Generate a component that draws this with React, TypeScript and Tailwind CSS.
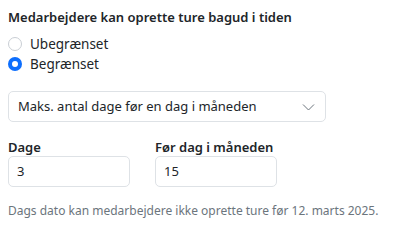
import React from "react";

export default function App() {
  return (
    <div
      className="bg-white w-[412px] h-[246px] pl-2 pt-[8px] text-[#212529]"
      style={{ fontFamily: '"Noto Sans", "Liberation Sans", sans-serif' }}
    >
      <div className="text-[13px] font-semibold leading-[18px]">
        Medarbejdere kan oprette ture bagud i tiden
      </div>
      <div className="mt-[9px] flex flex-col gap-[2px]">
        <label className="flex items-center gap-[8px] h-[18px] text-[13.5px]">
          <span className="w-[14px] h-[14px] rounded-full border border-[#c9ced4] bg-white" />
          <span>Ubegrænset</span>
        </label>
        <label className="flex items-center gap-[8px] h-[18px] text-[13.5px]">
          <span className="w-[14px] h-[14px] rounded-full bg-[#0d6efd] flex items-center justify-center">
            <span className="w-[6px] h-[6px] rounded-full bg-white" />
          </span>
          <span>Begrænset</span>
        </label>
      </div>
      <div className="mt-[18px] w-[318px] h-[31px] border border-[#dee2e6] rounded-[5px] flex items-center justify-between pl-[9px] pr-[10px] text-[13px]">
        <span>Maks. antal dage før en dag i måneden</span>
        <svg width="13" height="8" viewBox="0 0 13 8" fill="none">
          <path d="M1 1.5l5.5 5.5 5.5-5.5" stroke="#6c757d" strokeWidth="1" />
        </svg>
      </div>
      <div className="mt-[16px] flex gap-[25px]">
        <div className="w-[122px]">
          <div className="text-[13px] font-semibold leading-[18px]">Dage</div>
          <div className="h-[31px] border border-[#dee2e6] rounded-[5px] flex items-center pl-[8px] text-[13px]">
            3
          </div>
        </div>
        <div className="w-[122px]">
          <div className="text-[13px] font-semibold leading-[18px]">Før dag i måneden</div>
          <div className="h-[31px] border border-[#dee2e6] rounded-[5px] flex items-center pl-[8px] text-[13px]">
            15
          </div>
        </div>
      </div>
      <div className="mt-[15px] text-[12px] text-[#6c757d] leading-[18px]">
        Dags dato kan medarbejdere ikke oprette ture før 12. marts 2025.
      </div>
    </div>
  );
}
